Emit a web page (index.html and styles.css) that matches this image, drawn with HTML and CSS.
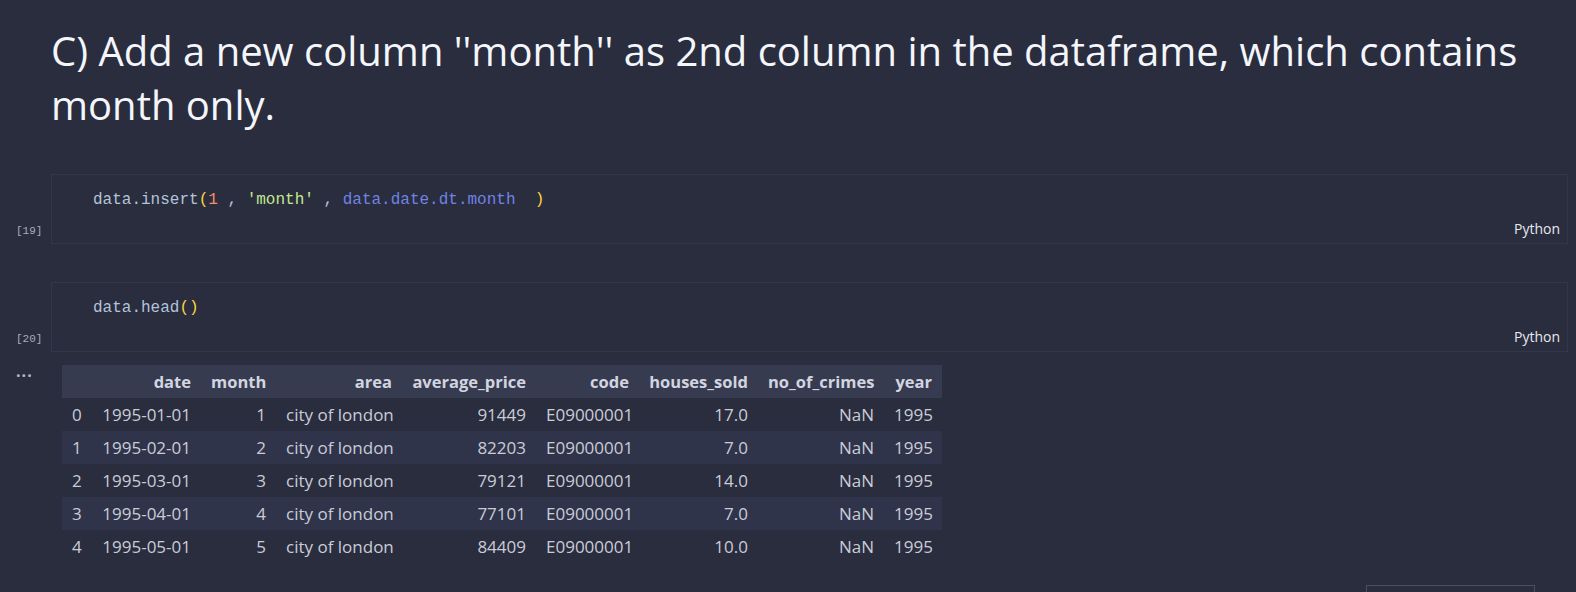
FILE: index.html
```html
<!DOCTYPE html>
<html lang="en">
<head>
<meta charset="utf-8">
<title>Notebook</title>
<link rel="stylesheet" href="styles.css">
</head>
<body>
<div class="notebook">
  <div class="md">
    <h1 class="title">C) Add a new column ''month'' as 2nd column in the dataframe, which contains month only.</h1>
  </div>

  <div class="cell cell-first">
    <div class="gutter"><span class="count">[19]</span></div>
    <div class="editor">
      <div class="code"><span class="v">data.insert</span><span class="p">(</span><span class="n">1</span><span class="v"> , </span><span class="s">'month'</span><span class="v"> , </span><span class="b">data.date.dt.month</span><span class="v">  </span><span class="p">)</span></div>
      <div class="lang">Python</div>
    </div>
  </div>

  <div class="cell">
    <div class="gutter"><span class="count">[20]</span></div>
    <div class="editor">
      <div class="code"><span class="v">data.head</span><span class="p">()</span></div>
      <div class="lang">Python</div>
    </div>
  </div>

  <div class="output">
    <div class="out-gutter"><span class="dots">···</span></div>
    <table class="df">
      <thead>
        <tr><th></th><th>date</th><th>month</th><th>area</th><th>average_price</th><th>code</th><th>houses_sold</th><th>no_of_crimes</th><th>year</th></tr>
      </thead>
      <tbody>
        <tr><td class="idx">0</td><td>1995-01-01</td><td>1</td><td>city of london</td><td>91449</td><td>E09000001</td><td>17.0</td><td>NaN</td><td>1995</td></tr>
        <tr><td class="idx">1</td><td>1995-02-01</td><td>2</td><td>city of london</td><td>82203</td><td>E09000001</td><td>7.0</td><td>NaN</td><td>1995</td></tr>
        <tr><td class="idx">2</td><td>1995-03-01</td><td>3</td><td>city of london</td><td>79121</td><td>E09000001</td><td>14.0</td><td>NaN</td><td>1995</td></tr>
        <tr><td class="idx">3</td><td>1995-04-01</td><td>4</td><td>city of london</td><td>77101</td><td>E09000001</td><td>7.0</td><td>NaN</td><td>1995</td></tr>
        <tr><td class="idx">4</td><td>1995-05-01</td><td>5</td><td>city of london</td><td>84409</td><td>E09000001</td><td>10.0</td><td>NaN</td><td>1995</td></tr>
      </tbody>
    </table>
  </div>

  <div class="footer-row">
    <div class="footer-box"></div>
  </div>
</div>
</body>
</html>
```

FILE: styles.css
```css
html, body {
  margin: 0;
  padding: 0;
  background: #292d3e;
  overflow: hidden;
  height: 592px;
}

.notebook {
  font-family: "Open Sans", "Noto Sans", sans-serif;
  color: #d4d7e2;
}

.md {
  padding: 24px 20px 0 51px;
}

.title {
  margin: 0;
  font-weight: 400;
  font-size: 40px;
  line-height: 54px;
  color: #f4f6fb;
  max-width: 1505px;
}

.cell {
  display: flex;
  margin-top: 38px;
  margin-right: 8px;
}

.cell-first {
  margin-top: 42px;
}

.gutter {
  width: 51px;
  flex: none;
  display: flex;
  align-items: flex-end;
  padding-bottom: 7px;
  box-sizing: border-box;
}

.count {
  font-family: "Liberation Mono", "DejaVu Sans Mono", monospace;
  font-size: 11px;
  color: #a8acba;
  padding-left: 16px;
}

.editor {
  flex: 1;
  height: 70px;
  box-sizing: border-box;
  border: 1px solid #33374b;
  display: flex;
  flex-direction: column;
  justify-content: space-between;
  padding: 14px 7px 5px 41px;
}

.code {
  font-family: "Liberation Mono", "DejaVu Sans Mono", monospace;
  font-size: 16px;
  line-height: 22px;
  white-space: pre;
}

.code .v { color: #b3c3da; }
.code .p { color: #ffd33d; }
.code .n { color: #f78c6c; }
.code .s { color: #c3e88d; }
.code .b { color: #7182e4; }

.lang {
  align-self: flex-end;
  font-size: 14px;
  line-height: 19px;
  color: #e6e8ef;
}

.output {
  display: flex;
  margin-top: 13px;
}

.out-gutter {
  width: 62px;
  flex: none;
}

.dots {
  display: block;
  padding-left: 16px;
  padding-top: 3px;
  font-size: 16px;
  line-height: 14px;
  font-weight: 700;
  color: #b4b7c4;
  letter-spacing: 1px;
}

.df {
  border-collapse: collapse;
  table-layout: fixed;
  width: 880px;
  font-size: 17px;
  color: #c9ccd8;
}

.df th, .df td {
  height: 33px;
  padding: 0 10px;
  text-align: right;
  white-space: nowrap;
  box-sizing: border-box;
}

.df th {
  font-weight: 700;
  font-size: 16.5px;
  color: #d2d5e0;
}

.df thead tr { background: #373b4f; }
.df tbody tr:nth-child(even) { background: #30344a; }

.df th:nth-child(1), .df td:nth-child(1) { width: 29px; text-align: left; }
.df th:nth-child(2), .df td:nth-child(2) { width: 110px; }
.df th:nth-child(3), .df td:nth-child(3) { width: 75px; }
.df th:nth-child(4), .df td:nth-child(4) { width: 126px; }
.df th:nth-child(5), .df td:nth-child(5) { width: 134px; }
.df th:nth-child(6), .df td:nth-child(6) { width: 103px; text-align: left; }
.df th:nth-child(7), .df td:nth-child(7) { width: 119px; }
.df th:nth-child(8), .df td:nth-child(8) { width: 126px; }
.df th:nth-child(9), .df td:nth-child(9) { width: 58px; }

.df th:nth-child(6) { text-align: right; }
.df td:nth-child(4) { text-align: left; }

.footer-row {
  display: flex;
  justify-content: flex-end;
  margin-top: 22px;
  margin-right: 41px;
}

.footer-box {
  width: 169px;
  height: 30px;
  box-sizing: border-box;
  border: 1px solid #4b4f5f;
}
```
